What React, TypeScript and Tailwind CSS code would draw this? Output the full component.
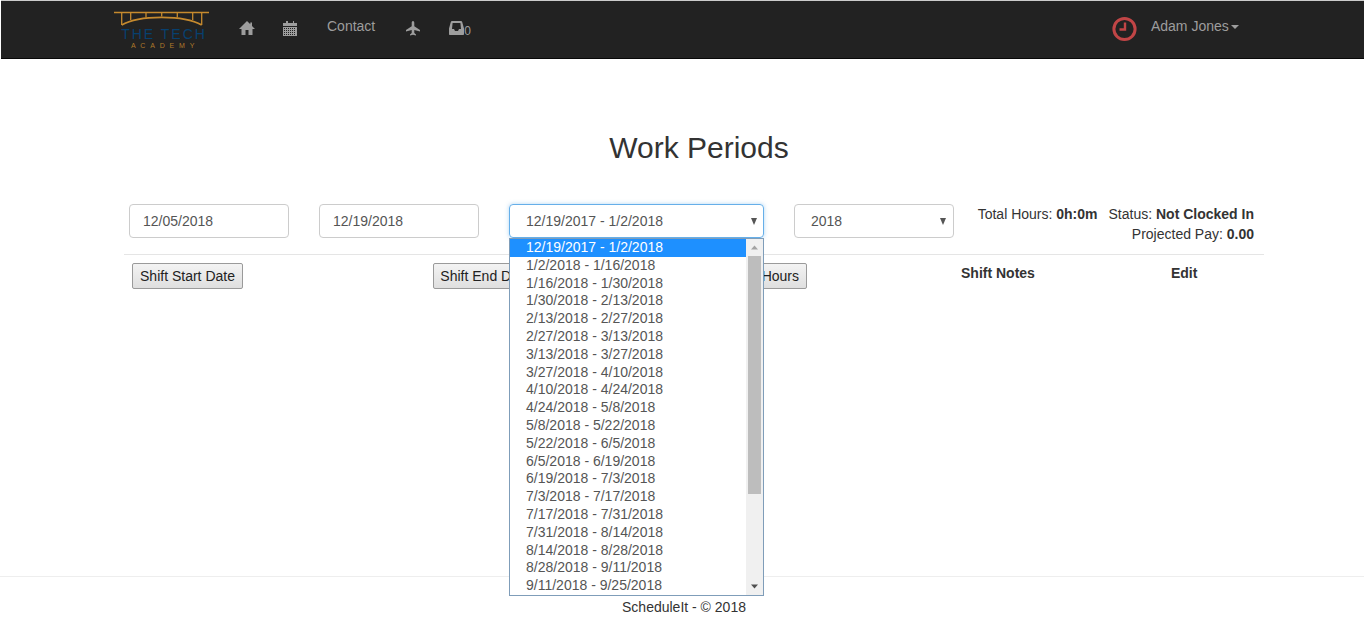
const options = [
  "12/19/2017 - 1/2/2018", "1/2/2018 - 1/16/2018", "1/16/2018 - 1/30/2018", "1/30/2018 - 2/13/2018",
  "2/13/2018 - 2/27/2018", "2/27/2018 - 3/13/2018", "3/13/2018 - 3/27/2018", "3/27/2018 - 4/10/2018",
  "4/10/2018 - 4/24/2018", "4/24/2018 - 5/8/2018", "5/8/2018 - 5/22/2018", "5/22/2018 - 6/5/2018",
  "6/5/2018 - 6/19/2018", "6/19/2018 - 7/3/2018", "7/3/2018 - 7/17/2018", "7/17/2018 - 7/31/2018",
  "7/31/2018 - 8/14/2018", "8/14/2018 - 8/28/2018", "8/28/2018 - 9/11/2018", "9/11/2018 - 9/25/2018",
];

function Logo() {
  return (
    <div className="relative w-[96px] h-[40px] flex flex-col items-center">
      <svg width="96" height="26" viewBox="0 0 96 26" fill="none" stroke="#c68a2e" strokeWidth="1.3" className="block">
        <path d="M0 1.5H95" />
        <path d="M7.7 1.5V14M16.7 1.5V9M32 1.5V6.5M47.7 1.5V5.5M63.3 1.5V6.5M78.7 1.5V9M87.7 1.5V14" />
        <path d="M7.7 14C25 3.7 70 3.7 87.7 14" strokeWidth="1.8" />
      </svg>
      <div className="absolute top-[15px] left-[2px] w-[96px] text-center text-[14px] leading-[17px] tracking-[2px] text-[#07406f] whitespace-nowrap">THE TECH</div>
      <div className="absolute top-[31px] left-[3px] w-[96px] text-center text-[7px] leading-[8px] tracking-[4.8px] text-[#b07a2a] whitespace-nowrap">ACADEMY</div>
    </div>
  );
}

function Caret({ className = "" }: { className?: string }) {
  return <span className={`inline-block w-0 h-0 border-x-[4px] border-x-transparent border-t-[4px] border-t-[#9d9d9d] ${className}`} />;
}

function SelectArrow() {
  return <span className="w-0 h-0 border-x-[3.5px] border-x-transparent border-t-[7px] border-t-[#555]" />;
}

export default function App() {
  return (
    <div className="relative h-[626px] overflow-hidden bg-white font-['Liberation_Sans',Arial,sans-serif] text-[14px] text-[#333]">
      <header className="ml-px h-[59px] bg-[#222] border-t border-t-[#ccc] border-b border-b-[#080808] flex items-start text-[#9d9d9d]">
        <div className="ml-[113px] mt-[10px] shrink-0"><Logo /></div>
        <svg width="16" height="14" viewBox="0 0 16 14" fill="#9d9d9d" className="ml-[29px] mt-[20px] shrink-0">
          <path d="M8 0 0 8H2.5V14H6.5V9H9.5V14H13.5V8H16L13 5V1.5H11.3V3.3Z" />
        </svg>
        <svg width="14" height="15" viewBox="0 0 14 15" className="ml-[28px] mt-[20px] shrink-0" shapeRendering="crispEdges">
          <path d="M0 1.5H3V0H4.5V1.5H9.5V0H11V1.5H14V4.5H0Z" fill="#9d9d9d" />
          <path d="M0 6.5H14M0 8.5H14M0 10.5H14M0 12.5H14M0 14.5H14M.5 6V15M2.5 6V15M4.5 6V15M6.5 6V15M8.5 6V15M10.5 6V15M12.5 6V15M13.5 6V15" stroke="#9d9d9d" strokeWidth="1" />
        </svg>
        <span className="ml-[30px] mt-[15px] leading-[20px]">Contact</span>
        <svg width="14" height="15" viewBox="0 0 14 15" fill="#9d9d9d" className="ml-[31px] mt-[20px] shrink-0">
          <path d="M7 0C6 0 5.7 1 5.7 2V5.2L0 9V10.4L5.7 9V12L4 13.5V14.5L7 13.8 10 14.5V13.5L8.3 12V9L14 10.4V9L8.3 5.2V2C8.3 1 8 0 7 0Z" />
        </svg>
        <svg width="15" height="14" viewBox="0 0 15 14" className="ml-[29px] mt-[20px] shrink-0">
          <path fillRule="evenodd" fill="#9d9d9d" d="M3 0H12C12.6 0 13 .4 13.2 1L15 7.5V13C15 13.6 14.6 14 14 14H1C.4 14 0 13.6 0 13V7.5L1.8 1C2 .4 2.4 0 3 0ZM3.6 2 3 8H5L6 10H9L10 8H12L11.4 2Z" />
        </svg>
        <span className="mt-[20px] text-[12px] leading-[20px]">0</span>
        <svg width="25" height="26" viewBox="0 0 25 26" fill="none" className="ml-[641px] mt-[15px] shrink-0">
          <circle cx="12.5" cy="13" r="10.6" stroke="#c14546" strokeWidth="3" />
          <path d="M13 6.5V13.5H7.5" stroke="#c14546" strokeWidth="2.4" />
        </svg>
        <span className="ml-[14px] mt-[15px] leading-[20px]">Adam Jones</span>
        <Caret className="mt-[24px] ml-[2px]" />
      </header>

      <h1 className="mt-[69px] text-center text-[30px] leading-[40px] pl-[34px] font-normal">Work Periods</h1>

      <main className="mt-[36px] mx-[124px] w-[1140px]">
        <div className="h-[51px] flex gap-[30px] pl-[5px] border-b border-b-[#e5e5e5]">
          <div className="w-[160px] shrink-0 h-[34px] px-[13px] border border-[#ccc] rounded-[4px] flex items-center text-[#555]">12/05/2018</div>
          <div className="w-[160px] shrink-0 h-[34px] px-[13px] border border-[#ccc] rounded-[4px] flex items-center text-[#555]">12/19/2018</div>
          <div className="w-[255px] shrink-0 h-[34px] pl-[16px] pr-[6px] border border-[#66afe9] rounded-[4px] flex items-center justify-between text-[#555] shadow-[0_0_4px_rgba(102,175,233,0.5)]">
            <span>12/19/2017 - 1/2/2018</span>
            <SelectArrow />
          </div>
          <div className="w-[160px] shrink-0 h-[34px] pl-[16px] pr-[7px] border border-[#ccc] rounded-[4px] flex items-center justify-between text-[#555]">
            <span>2018</span>
            <SelectArrow />
          </div>
          <div className="flex-1 pr-[10px] -ml-[8px] text-right leading-[20px]">
            <div className="whitespace-nowrap">Total Hours: <b>0h:0m</b><span className="ml-[11px]">Status: </span><b>Not Clocked In</b></div>
            <div>Projected Pay: <b>0.00</b></div>
          </div>
        </div>

        <div className="flex items-start mt-[8px] text-[14px]">
          <button className="ml-[8px] h-[26px] w-[111px] border border-[#9a9a9a] rounded-[2px] bg-linear-to-b from-[#f3f3f3] to-[#dfdfdf] text-center text-[#222] whitespace-nowrap">Shift Start Date</button>
          <button className="ml-[190px] h-[26px] w-[105px] border border-[#9a9a9a] rounded-[2px] bg-linear-to-b from-[#f3f3f3] to-[#dfdfdf] text-center text-[#222] whitespace-nowrap">Shift End Date</button>
          <button className="ml-[173px] h-[26px] w-[96px] pr-[7px] border border-[#9a9a9a] rounded-[2px] bg-linear-to-b from-[#f3f3f3] to-[#dfdfdf] text-right text-[#222] whitespace-nowrap overflow-hidden">Total Hours</button>
          <b className="ml-[154px] leading-[20px]">Shift Notes</b>
          <b className="ml-[136px] leading-[20px]">Edit</b>
        </div>
      </main>

      <footer className="absolute left-0 right-0 top-[576px] border-t border-t-[#eee] pt-[20px] pl-[4px] text-center leading-[20px]">ScheduleIt - © 2018</footer>

      <div className="absolute left-[509px] top-[238px] w-[255px] h-[358px] bg-white border border-[#7f9db9] flex overflow-hidden text-[#555]">
        <div className="w-[236px]">
          {options.map((o, i) => (
            <div key={o} className={`h-[17.8px] pl-[16px] leading-[17.8px] whitespace-nowrap ${i === 0 ? "bg-[#1e90ff] text-white" : ""}`}>{o}</div>
          ))}
        </div>
        <div className="w-[17px] bg-[#f0f0f0] flex flex-col items-center">
          <svg width="17" height="17" viewBox="0 0 17 17" className="shrink-0"><path d="M5 10.5 8.5 6.5 12 10.5Z" fill="#a3a3a3" /></svg>
          <div className="w-[13px] h-[238px] bg-[#bdbdbd]" />
          <div className="flex-1" />
          <svg width="17" height="17" viewBox="0 0 17 17" className="shrink-0"><path d="M5 6.5 8.5 10.5 12 6.5Z" fill="#505050" /></svg>
        </div>
      </div>
    </div>
  );
}
